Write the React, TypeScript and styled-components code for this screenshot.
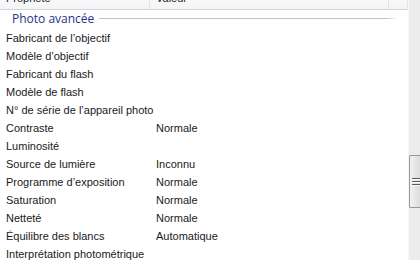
import styled, { createGlobalStyle } from "styled-components"

const GlobalStyle = createGlobalStyle`
  html, body {
    margin: 0;
    padding: 0;
    background: #fff;
  }
`

const Window = styled.div`
  width: 420px;
  height: 260px;
  overflow: hidden;
  display: flex;
  background: #fff;
  font-family: "Liberation Sans", Arial, sans-serif;
  font-size: 11px;
  color: #1a1a1a;
`

const ListView = styled.div`
  flex: 1;
  display: flex;
  flex-direction: column;
  overflow: hidden;
`

const HeaderBar = styled.div`
  display: flex;
  height: 24px;
  margin-top: -15px;
  flex-shrink: 0;
  background: linear-gradient(#ffffff, #f3f4f6);
  border-bottom: 1px solid #d5d5d5;
`

const HeaderCell = styled.div<{ $width?: number }>`
  width: ${p => (p.$width ? `${p.$width}px` : "auto")};
  flex: ${p => (p.$width ? "none" : 1)};
  padding-left: 6px;
  line-height: 26px;
  border-right: 1px solid #e3e5e8;
  box-sizing: border-box;
  white-space: nowrap;
  color: #1e1e1e;
`

const GroupHeader = styled.div`
  display: flex;
  align-items: center;
  height: 21px;
  box-sizing: border-box;
  padding: 0 10px 2px 12px;
  color: #1e3287;
  font-family: "Open Sans", sans-serif;
  font-size: 12px;
`

const GroupLine = styled.div`
  flex: 1;
  height: 1px;
  margin-left: 5px;
  background: linear-gradient(to right, #b8c2d4 0%, #b8c2d4 96%, #ffffff 100%);
`

const Row = styled.div`
  display: flex;
  height: 18px;
  align-items: center;
  flex-shrink: 0;
  white-space: nowrap;
`

const NameCell = styled.div`
  width: 150px;
  padding-left: 6px;
  box-sizing: border-box;
  overflow: visible;
`

const ValueCell = styled.div`
  padding-left: 6px;
`

const ScrollTrack = styled.div`
  width: 11px;
  flex-shrink: 0;
  background: #ececec;
  border-left: 1px solid #f6f6f6;
  display: flex;
  flex-direction: column;
`

const ScrollThumb = styled.div`
  margin-top: 155px;
  height: 53px;
  box-sizing: border-box;
  border: 1px solid #979797;
  border-right: none;
  border-radius: 2px 0 0 2px;
  background: linear-gradient(to right, #f2f2f2, #dcdcdc);
  display: flex;
  flex-direction: column;
  justify-content: center;
  gap: 1px;
  padding-left: 2px;
`

const Grip = styled.div`
  height: 1px;
  width: 8px;
  background: #5a5a5a;
  border-bottom: 1px solid #fafafa;
`

const rows: [string, string][] = [
  ["Fabricant de l’objectif", ""],
  ["Modèle d’objectif", ""],
  ["Fabricant du flash", ""],
  ["Modèle de flash", ""],
  ["N° de série de l’appareil photo", ""],
  ["Contraste", "Normale"],
  ["Luminosité", ""],
  ["Source de lumière", "Inconnu"],
  ["Programme d’exposition", "Normale"],
  ["Saturation", "Normale"],
  ["Netteté", "Normale"],
  ["Équilibre des blancs", "Automatique"],
  ["Interprétation photométrique", ""],
]

export default function App() {
  return (
    <>
      <GlobalStyle />
      <Window>
        <ListView>
          <HeaderBar>
            <HeaderCell $width={150}>Propriété</HeaderCell>
            <HeaderCell $width={239}>Valeur</HeaderCell>
            <HeaderCell />
          </HeaderBar>
          <GroupHeader>
            Photo avancée
            <GroupLine />
          </GroupHeader>
          {rows.map(([name, value]) => (
            <Row key={name}>
              <NameCell>{name}</NameCell>
              <ValueCell>{value}</ValueCell>
            </Row>
          ))}
        </ListView>
        <ScrollTrack>
          <ScrollThumb>
            <Grip />
            <Grip />
            <Grip />
          </ScrollThumb>
        </ScrollTrack>
      </Window>
    </>
  )
}
